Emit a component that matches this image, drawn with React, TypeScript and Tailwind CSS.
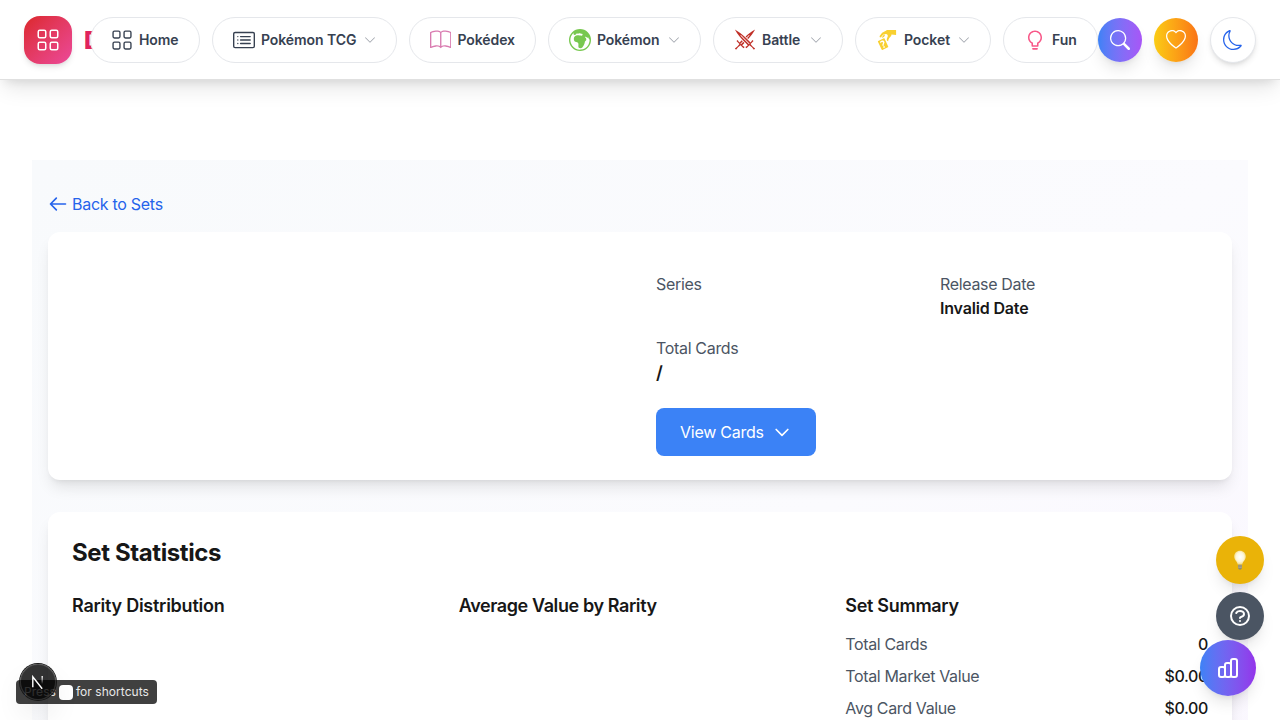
import type { ReactNode } from 'react';
import {
  BsBook,
  BsCardList,
  BsChevronDown,
  BsGlobeEuropeAfrica,
  BsGrid,
  BsHeart,
  BsMoon,
  BsSearch,
} from 'react-icons/bs';
import { GiCardPickup, GiCrossedSwords } from 'react-icons/gi';
import { AiOutlineBulb } from 'react-icons/ai';
import {
  HiOutlineArrowLeft,
  HiOutlineChartBar,
  HiOutlineChevronDown,
  HiOutlineQuestionMarkCircle,
} from 'react-icons/hi';

type NavPillProps = { icon: ReactNode; label: string; menu?: boolean; width: string };

function NavPill({ icon, label, menu, width }: NavPillProps) {
  return (
    <a
      className={`relative z-10 flex h-[46px] shrink-0 items-center rounded-full border border-[#e5e7eb] bg-white px-5 text-sm font-semibold tracking-[-0.08px] text-[#374151] ${width}`}
    >
      {icon}
      <span className="ml-1.5 whitespace-nowrap">{label}</span>
      {menu && <BsChevronDown size={12} className="ml-auto opacity-50" />}
    </a>
  );
}

function Header() {
  return (
    <header className="relative z-20 flex h-20 items-center border-b border-[#e0e0e0] bg-white pl-6 shadow-[0_12px_20px_-4px_rgba(0,0,0,0.1),0_6px_10px_-5px_rgba(0,0,0,0.1)]">
      <div className="flex w-[66px] shrink-0 items-center gap-3">
        <div className="flex size-12 shrink-0 items-center justify-center rounded-2xl bg-linear-to-br from-[#dc2626] to-[#ec4899] text-white shadow-md">
          <BsGrid size={24} />
        </div>
        <span className="pt-0.5 text-2xl font-extrabold text-[#e0245e]">D</span>
      </div>
      <nav className="flex shrink-0 gap-3">
        <NavPill width="w-[110px]" icon={<BsGrid size={22} />} label="Home" />
        <NavPill width="w-[185px]" icon={<BsCardList size={22} />} label="Pokémon TCG" menu />
        <NavPill width="w-[127px]" icon={<BsBook size={22} color="#d97bb0" />} label="Pokédex" />
        <NavPill width="w-[153px]" icon={<BsGlobeEuropeAfrica size={22} color="#78c850" />} label="Pokémon" menu />
        <NavPill width="w-[130px]" icon={<GiCrossedSwords size={22} color="#c03028" />} label="Battle" menu />
        <NavPill width="w-[136px]" icon={<GiCardPickup size={22} color="#f8d030" />} label="Pocket" menu />
        <NavPill width="w-[95px]" icon={<AiOutlineBulb size={22} color="#f85888" />} label="Fun" />
      </nav>
      <div className="flex shrink-0 items-center gap-3 text-white">
        <button className="flex size-11 items-center justify-center rounded-full bg-linear-to-r from-[#3b82f6] to-[#a855f7] shadow-lg">
          <BsSearch size={20} />
        </button>
        <button className="flex size-11 items-center justify-center rounded-full bg-linear-to-r from-[#facc15] to-[#f97316] shadow-lg">
          <BsHeart size={20} />
        </button>
        <button className="flex size-[46px] items-center justify-center rounded-full border border-[#e5e7eb] bg-white text-[#2563eb] shadow-md">
          <BsMoon size={20} />
        </button>
      </div>
    </header>
  );
}

function SetDetails() {
  return (
    <section className="mt-4 grid h-[248px] grid-cols-2 gap-8 rounded-xl bg-white p-6 shadow-lg">
      <div />
      <div className="pt-4">
        <dl className="grid grid-cols-2 gap-4">
          <div className="h-12">
            <dt className="text-[#4b5563]">Series</dt>
          </div>
          <div className="h-12">
            <dt className="text-[#4b5563]">Release Date</dt>
            <dd className="font-semibold tracking-[-0.17px]">Invalid Date</dd>
          </div>
          <div className="h-14">
            <dt className="text-[#4b5563]">Total Cards</dt>
            <dd className="text-lg/[26px] font-semibold">/</dd>
          </div>
        </dl>
        <button className="mt-4 flex h-12 w-40 items-center gap-2 rounded-lg bg-[#3b82f6] px-6 tracking-[-0.25px] text-white">
          <span>View Cards</span>
          <HiOutlineChevronDown size={20} />
        </button>
      </div>
    </section>
  );
}

const summary = [
  ['Total Cards', '0'],
  ['Total Market Value', '$0.00'],
  ['Avg Card Value', '$0.00'],
];

function SetStatistics() {
  return (
    <section className="mt-8 h-[420px] rounded-xl bg-white px-6 pt-[25px] shadow-lg">
      <h2 className="text-2xl font-bold tracking-[-0.4px]">Set Statistics</h2>
      <div className="mt-[23px] grid grid-cols-3 gap-6 text-lg font-semibold">
        <h3 className="tracking-[-0.25px]">Rarity Distribution</h3>
        <h3 className="tracking-[-0.4px]">Average Value by Rarity</h3>
        <div>
          <h3 className="tracking-[-0.3px]">Set Summary</h3>
          <div className="mt-3 flex flex-col gap-2 text-base font-normal tracking-[-0.36px]">
            {summary.map(([name, value]) => (
              <div key={name} className="flex justify-between">
                <span className="text-[#4b5563]">{name}</span>
                <span className="font-medium">{value}</span>
              </div>
            ))}
          </div>
        </div>
      </div>
    </section>
  );
}

function BulbGlyph() {
  return (
    <svg width="20" height="20" viewBox="0 0 20 20">
      <defs>
        <radialGradient id="glass" cx="50%" cy="45%" r="55%">
          <stop offset="0" stopColor="#ffffff" />
          <stop offset="0.6" stopColor="#fdf6d8" />
          <stop offset="1" stopColor="#f3d775" />
        </radialGradient>
      </defs>
      <path
        d="M10 0.800C6.700 0.800 4.200 3.200 4.200 6.400c0 3.400 3 4.900 3.700 8.400h4.200c0.700-3.500 3.700-5 3.700-8.400C15.800 3.200 13.300 0.800 10 0.800z"
        fill="url(#glass)"
      />
      <path d="M8 14.800h4v3.200l-1 1.500H9l-1-1.500z" fill="#8b8468" />
      <path d="M8 16h4M8.200 17.700h3.600" stroke="#c9c5ae" strokeWidth="0.600" />
    </svg>
  );
}

function FloatingControls() {
  return (
    <>
      <button className="absolute top-[536px] left-[1216px] z-30 flex size-12 items-center justify-center rounded-full bg-[#eab308] shadow-lg">
        <BulbGlyph />
      </button>
      <button className="absolute top-[592px] left-[1216px] z-30 flex size-12 items-center justify-center rounded-full bg-[#4b5563] text-white shadow-lg">
        <HiOutlineQuestionMarkCircle size={24} />
      </button>
      <button className="absolute top-[640px] left-[1200px] z-30 flex size-14 items-center justify-center rounded-full bg-linear-to-r from-[#3b82f6] to-[#9333ea] text-white shadow-lg">
        <HiOutlineChartBar size={24} />
      </button>
      <div className="absolute top-[680px] left-4 z-30 flex h-6 w-[141px] items-center rounded bg-black/75 px-2 text-xs tracking-[0.05px] text-[#e8e8e8]">
        <span className="w-[35px]">Press</span>
        <kbd className="h-[15px] w-[14px] rounded bg-white" />
        <span className="ml-[3px] whitespace-nowrap">for shortcuts</span>
      </div>
      <div className="absolute top-[664px] left-5 z-40 flex size-9 items-center justify-center rounded-full bg-black/80 shadow-[0_0_0_1px_#171717,inset_0_0_0_1px_rgba(255,255,255,0.14),0_16px_32px_-8px_rgba(0,0,0,0.24)]">
        <svg width="14" height="14" viewBox="0 0 14 14" fill="none">
          <defs>
            <linearGradient id="stem" x1="0" y1="1" x2="0" y2="9" gradientUnits="userSpaceOnUse">
              <stop stopColor="#fff" />
              <stop offset="1" stopColor="#fff" stopOpacity="0" />
            </linearGradient>
          </defs>
          <path d="M1.800 12.200V1.800l9.400 12" stroke="#fff" strokeWidth="1.400" />
          <path d="M10.500 1h1.400v8h-1.400z" fill="url(#stem)" />
        </svg>
      </div>
    </>
  );
}

export default function App() {
  return (
    <div className="relative h-[720px] w-[1280px] overflow-hidden bg-white font-['Inter','Liberation_Sans',sans-serif] text-base tracking-[-0.33px] text-[#171717]">
      <Header />
      <main className="mx-8 mt-20 h-[1000px] bg-linear-to-br from-[#f8fafc] via-[#fbfbfe] to-[#faf5ff] px-4 pt-8">
        <a className="flex h-6 items-center gap-1 tracking-[-0.28px] text-[#2563eb]">
          <HiOutlineArrowLeft size={20} />
          Back to Sets
        </a>
        <SetDetails />
        <SetStatistics />
      </main>
      <FloatingControls />
    </div>
  );
}
